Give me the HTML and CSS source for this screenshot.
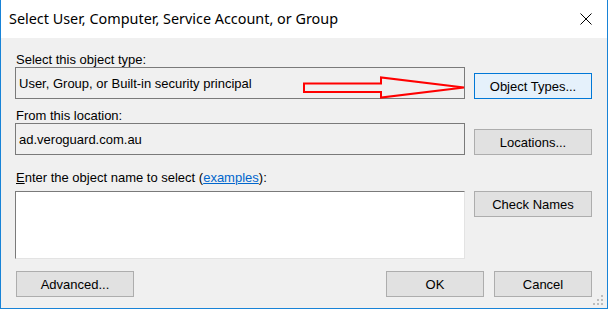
FILE: index.html
```html
<!DOCTYPE html>
<html>
<head>
<meta charset="utf-8">
<link rel="stylesheet" href="styles.css">
</head>
<body>
<div class="window">
  <div class="titlebar">
    <span class="title">Select User, Computer, Service Account, or Group</span>
    <svg class="close" width="12" height="12" viewBox="0 0 12 12"><path d="M0.5 0.5 L11.5 11.5 M11.5 0.5 L0.5 11.5" stroke="#000" stroke-width="1" fill="none"/></svg>
  </div>
  <div class="content">
    <div class="label l1">Select this object type:</div>
    <div class="row">
      <div class="field">User, Group, or Built-in security principal</div>
      <button class="btn default">Object Types...</button>
    </div>
    <div class="label l2">From this location:</div>
    <div class="row">
      <div class="field">ad.veroguard.com.au</div>
      <button class="btn">Locations...</button>
    </div>
    <div class="label l3"><u>E</u>nter the object name to select (<a class="link">examples</a>):</div>
    <div class="row top">
      <div class="textarea"></div>
      <button class="btn">Check Names</button>
    </div>
    <div class="footer">
      <button class="btn">Advanced...</button>
      <div class="spacer"></div>
      <button class="btn small">OK</button>
      <button class="btn small">Cancel</button>
    </div>
  </div>
  <svg class="arrow" width="170" height="30" viewBox="300 72 170 30">
    <polygon points="304,83.5 381,83.5 381,77.5 464,87.5 381,97.5 381,92 304,92" fill="none" stroke="#ff0000" stroke-width="2"/>
  </svg>
  <div class="grip">
    <i style="left:8px;top:0"></i>
    <i style="left:4px;top:4px"></i><i style="left:8px;top:4px"></i>
    <i style="left:0;top:8px"></i><i style="left:4px;top:8px"></i><i style="left:8px;top:8px"></i>
  </div>
</div>
</body>
</html>
```
FILE: styles.css
```css
* { box-sizing: border-box; }
html, body { margin: 0; padding: 0; background: #ffffff; }
.window {
  position: relative;
  width: 608px;
  height: 309px;
  border: 1px solid #1883d7;
  border-top: none;
  background: #f0f0f0;
  display: flex;
  flex-direction: column;
  font-family: "Liberation Sans", Arial, sans-serif;
  font-size: 13px;
  color: #000;
}
.titlebar {
  height: 38px;
  background: #ffffff;
  display: flex;
  align-items: flex-start;
  position: relative;
}
.title {
  font-family: "Noto Sans", "Segoe UI", sans-serif;
  font-size: 14.4px;
  line-height: 20px;
  padding-left: 8px;
  padding-top: 9px;
  color: #000;
}
.close {
  position: absolute;
  left: 579px;
  top: 13px;
}
.content {
  flex: 1;
  padding: 15px 15px 11px 14px;
  display: flex;
  flex-direction: column;
}
.label {
  line-height: 14px;
  height: 14px;
  padding-left: 1px;
  white-space: nowrap;
}
.l2 { margin-top: 10px; }
.l3 { margin-top: 16px; margin-bottom: 6px; }
.link { color: #0066cc; text-decoration: underline; }
.row {
  display: flex;
  align-items: flex-end;
  gap: 9px;
}
.row.top { align-items: flex-start; }
.field {
  width: 450px;
  height: 32px;
  border: 1px solid #7a7a7a;
  padding-left: 3px;
  display: flex;
  align-items: center;
  line-height: 15px;
}
.textarea {
  width: 450px;
  height: 68px;
  background: #ffffff;
  border: 1px solid;
  border-color: #7a7a7a #e3e3e3 #e3e3e3 #7a7a7a;
}
.btn {
  width: 118px;
  height: 26px;
  background: #e1e1e1;
  border: 1px solid #adadad;
  font-family: "Liberation Sans", Arial, sans-serif;
  font-size: 13px;
  color: #000;
  padding: 0;
  margin: 0;
  line-height: 15px;
}
.btn.default {
  background: #e5f1fb;
  border-color: #0078d7;
}
.btn.small { width: 98px; }
.footer {
  margin-top: 12px;
  display: flex;
  gap: 10px;
  padding-left: 1px;
}
.spacer { flex: 1; }
.arrow {
  position: absolute;
  left: 299px;
  top: 72px;
}
.grip {
  position: absolute;
  left: 592px;
  top: 295px;
  width: 10px;
  height: 10px;
}
.grip i {
  position: absolute;
  width: 2px;
  height: 2px;
  background: #bcbcbc;
}
```
